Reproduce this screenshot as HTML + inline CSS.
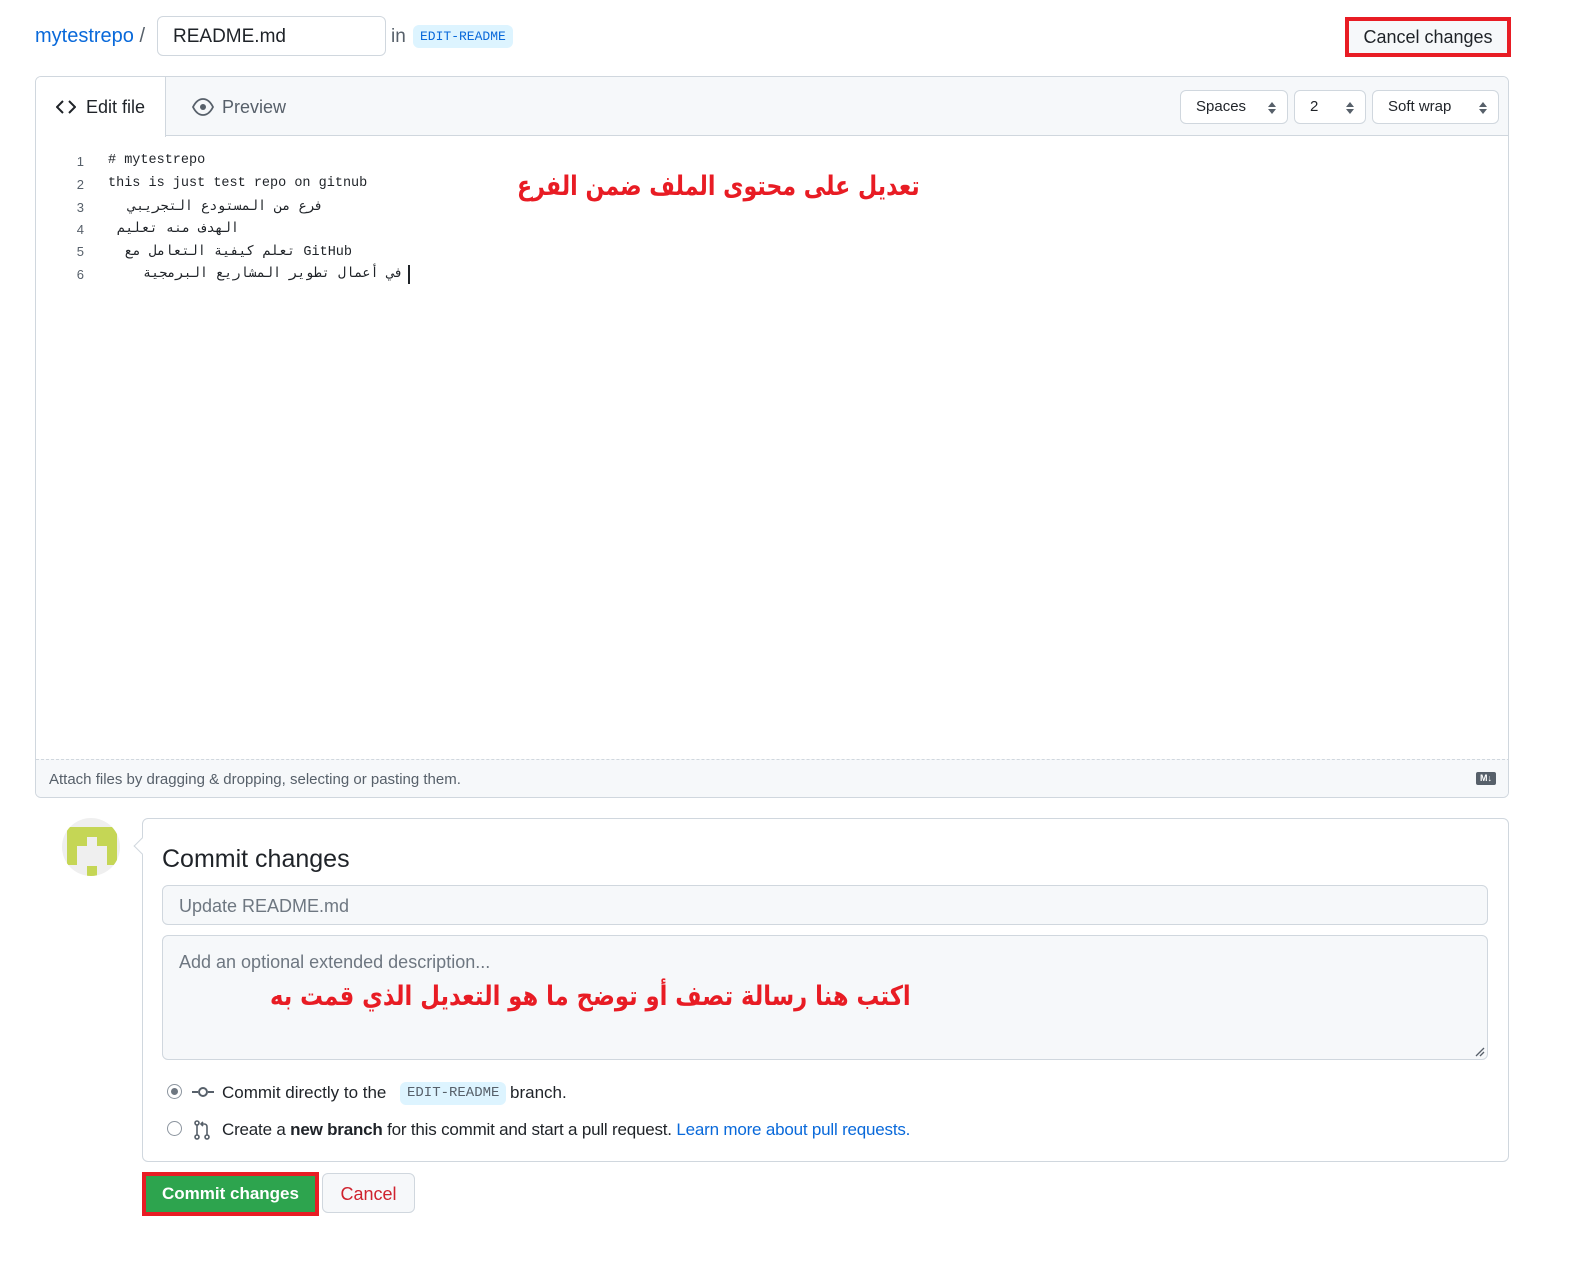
<!DOCTYPE html>
<html><head><meta charset="utf-8"><style>
*{box-sizing:border-box;margin:0;padding:0}
body{width:1574px;height:1288px;background:#fff;font-family:"Liberation Sans","Noto Sans CJK SC",sans-serif;color:#1f2328;position:relative;overflow:hidden}
.abs{position:absolute}
.mono{font-family:"Liberation Mono","DejaVu Sans Mono",monospace}
.ar{font-family:"DejaVu Sans","Noto Sans CJK SC",sans-serif}
.sel{position:absolute;top:90px;height:34px;border:1px solid #d0d7de;border-radius:6px;background:#fff;font-size:15px;line-height:32px;padding-left:15px}
.sel svg{position:absolute;right:10px;top:10px}
.ln{position:absolute;left:30px;width:18px;text-align:right;font-size:13px;color:#57606a}
.code{position:absolute;left:72px;font-size:13.5px;white-space:pre}
.rtl{direction:rtl;text-align:right;overflow:visible}
.ann{position:absolute;display:inline-block;white-space:nowrap;direction:rtl;font-size:27px;font-weight:bold;color:#e81c24;transform-origin:left top}
</style></head><body>
<div class="abs" style="left:35px;top:25px;font-size:20px;color:#0969da">mytestrepo <span style="color:#57606a">/</span></div>
<div class="abs" style="left:157px;top:16px;width:229px;height:40px;border:1px solid #d0d7de;border-radius:6px;font-size:19px;line-height:40px;padding-left:15px">README.md</div>
<div class="abs" style="left:391px;top:26px;font-size:19px;color:#57606a">in</div>
<div class="abs mono" style="left:413px;top:25px;height:23px;padding:0 7px;background:#ddf4ff;color:#0969da;border-radius:6px;font-size:13px;line-height:23px">EDIT-README</div>
<div class="abs" style="left:1345px;top:17px;width:166px;height:40px;border:4px solid #e81c24;background:#f6f8fa;font-size:18px;line-height:33px;text-align:center">Cancel changes</div>

<div class="abs" style="left:35px;top:76px;width:1474px;height:722px;border:1px solid #d0d7de;border-radius:6px;overflow:hidden">
 <div class="abs" style="left:0;top:0;width:1474px;height:59px;background:#f6f8fa;border-bottom:1px solid #d0d7de"></div>
 <div class="abs" style="left:0;top:0;width:130px;height:60px;background:#fff;border-right:1px solid #d0d7de"></div>
 <svg class="abs" style="left:20px;top:22px" width="20" height="16" viewBox="0 0 20 16"><path d="M7 2 1 8l6 6M13 2l6 6-6 6" fill="none" stroke="#1f2328" stroke-width="2"/></svg>
 <div class="abs" style="left:50px;top:20px;font-size:18px">Edit file</div>
 <svg class="abs" style="left:156px;top:21px" width="22" height="18" viewBox="0 0 22 18"><path d="M1 9C4 3 8 1 11 1s7 2 10 8c-3 6-7 8-10 8S4 15 1 9z" fill="none" stroke="#57606a" stroke-width="1.8"/><circle cx="11" cy="9" r="3" fill="#57606a"/></svg>
 <div class="abs" style="left:186px;top:20px;font-size:18px;color:#57606a">Preview</div>
 <div class="sel" style="left:1144px;top:13px;width:108px">Spaces<svg width="10" height="14"><path d="M1 6 5 1 9 6zM1 8l4 5 4-5z" fill="#57606a"/></svg></div>
 <div class="sel" style="left:1258px;top:13px;width:72px">2<svg width="10" height="14"><path d="M1 6 5 1 9 6zM1 8l4 5 4-5z" fill="#57606a"/></svg></div>
 <div class="sel" style="left:1336px;top:13px;width:127px">Soft wrap<svg width="10" height="14"><path d="M1 6 5 1 9 6zM1 8l4 5 4-5z" fill="#57606a"/></svg></div>

 <div class="ln" style="top:77px">1</div><div class="code mono" style="top:76px"># mytestrepo</div>
 <div class="ln" style="top:100px">2</div><div class="code mono" style="top:99px">this is just test repo on gitnub</div>
 <div class="ln" style="top:123px">3</div><div class="code mono rtl" style="top:121px;width:215px">فرع من المستودع التجريبي</div>
 <div class="ln" style="top:145px">4</div><div class="code mono rtl" style="top:143px;left:74px;width:129px">الهدف منه تعليم</div>
 <div class="ln" style="top:167px">5</div><div class="code mono rtl" style="top:166px;left:73px;width:243px">GitHub تعلم كيفية التعامل مع</div>
 <div class="ln" style="top:190px">6</div><div class="code mono rtl" style="top:188px;left:82px;width:285px">في أعمال تطوير المشاريع البرمجية</div>
 <div class="abs" style="left:372px;top:188px;width:2px;height:19px;background:#1f2328"></div>

 <div class="abs" style="left:0;top:682px;width:1474px;height:40px;background:#f6f8fa;border-top:1px dashed #d0d7de"></div>
 <div class="abs" style="left:13px;top:694px;font-size:15px;color:#57606a">Attach files by dragging &amp; dropping, selecting or pasting them.</div>
 <div class="abs" style="left:1440px;top:695px;width:20px;height:13px;background:#57606a;border-radius:2px;color:#fff;font-size:9px;font-weight:bold;line-height:13px;text-align:center">M↓</div>
</div>
<div class="ann ar" style="left:517px;top:171px;transform:scaleX(0.82)">تعديل على محتوى الملف ضمن الفرع</div>

<div class="abs" style="left:62px;top:818px;width:58px;height:58px;border-radius:50%;background:#efefef;overflow:hidden">
 <div class="abs" style="left:5px;top:9px;width:50px;height:10px;background:#c5d655"></div>
 <div class="abs" style="left:5px;top:18px;width:20px;height:10px;background:#c5d655"></div>
 <div class="abs" style="left:35px;top:18px;width:20px;height:10px;background:#c5d655"></div>
 <div class="abs" style="left:5px;top:27px;width:10px;height:20px;background:#c5d655"></div>
 <div class="abs" style="left:45px;top:27px;width:10px;height:20px;background:#c5d655"></div>
 <div class="abs" style="left:25px;top:48px;width:10px;height:10px;background:#c5d655"></div>
</div>

<div class="abs" style="left:142px;top:818px;width:1367px;height:344px;border:1px solid #d0d7de;border-radius:6px"></div>
<div class="abs" style="left:136px;top:840px;width:12px;height:12px;background:#fff;border-left:1px solid #d0d7de;border-bottom:1px solid #d0d7de;transform:rotate(45deg)"></div>
<div class="abs" style="left:162px;top:845px;font-size:25px">Commit changes</div>
<div class="abs" style="left:162px;top:885px;width:1326px;height:40px;border:1px solid #d0d7de;border-radius:6px;background:#f6f8fa;font-size:18px;color:#6e7781;line-height:40px;padding-left:16px">Update README.md</div>
<div class="abs" style="left:162px;top:935px;width:1326px;height:125px;border:1px solid #d0d7de;border-radius:6px;background:#f6f8fa;font-size:18px;color:#6e7781;padding:16px 16px">Add an optional extended description...</div>
<svg class="abs" style="left:1473px;top:1045px" width="12" height="12"><path d="M11 3 3 11M11 7l-4 4" stroke="#57606a" stroke-width="1.3"/></svg>
<div class="ann ar" style="left:270px;top:981px;transform:scaleX(0.84)">اكتب هنا رسالة تصف أو توضح ما هو التعديل الذي قمت به</div>

<div class="abs" style="left:167px;top:1084px;width:15px;height:15px;border:1px solid #8c959f;border-radius:50%"><div style="margin:3px;width:7px;height:7px;border-radius:50%;background:#6e7781"></div></div>
<svg class="abs" style="left:192px;top:1086px" width="22" height="12"><path d="M0 6h6M16 6h6" stroke="#57606a" stroke-width="2"/><circle cx="11" cy="6" r="4" fill="none" stroke="#57606a" stroke-width="2"/></svg>
<div class="abs" style="left:222px;top:1083px;font-size:17px;color:#1f2328">Commit directly to the</div>
<div class="abs mono" style="left:400px;top:1082px;height:23px;padding:0 7px;background:#ddf4ff;color:#57606a;border-radius:6px;font-size:14px;line-height:23px">EDIT-README</div>
<div class="abs" style="left:510px;top:1083px;font-size:17px">branch.</div>

<div class="abs" style="left:167px;top:1121px;width:15px;height:15px;border:1px solid #8c959f;border-radius:50%"></div>
<svg class="abs" style="left:193px;top:1120px" width="18" height="20" viewBox="0 0 18 20"><circle cx="4" cy="3" r="2" fill="none" stroke="#57606a" stroke-width="1.6"/><circle cx="4" cy="17" r="2" fill="none" stroke="#57606a" stroke-width="1.6"/><circle cx="14" cy="17" r="2" fill="none" stroke="#57606a" stroke-width="1.6"/><path d="M4 5v10M14 15V7q0-3-3-3H8M10 2 8 4l2 2" fill="none" stroke="#57606a" stroke-width="1.6"/></svg>
<div class="abs" style="left:222px;top:1120px;font-size:17px;white-space:nowrap;letter-spacing:-0.2px">Create a <b>new branch</b> for this commit and start a pull request. <span style="color:#0969da">Learn more about pull requests.</span></div>

<div class="abs" style="left:142px;top:1172px;width:177px;height:44px;border:4px solid #e81c24;background:#2da44e;color:#fff;font-size:17px;font-weight:bold;line-height:36px;text-align:center">Commit changes</div>
<div class="abs" style="left:322px;top:1173px;width:93px;height:40px;border:1px solid #d0d7de;border-radius:6px;background:#f6f8fa;color:#cf222e;font-size:18px;line-height:40px;text-align:center">Cancel</div>
</body></html>
